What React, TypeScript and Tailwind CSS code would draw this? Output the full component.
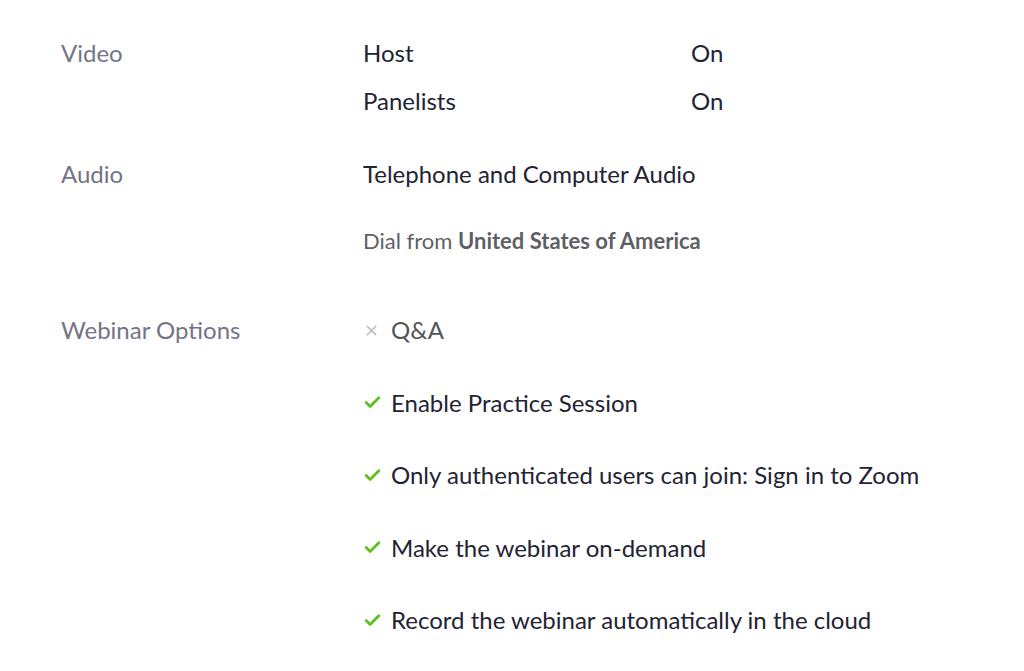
import { Check, X } from 'lucide-react';

const options = [
  { on: false, text: 'Q&A' },
  { on: true, text: 'Enable Practice Session' },
  { on: true, text: 'Only authenticated users can join: Sign in to Zoom' },
  { on: true, text: 'Make the webinar on-demand' },
  { on: true, text: 'Record the webinar automatically in the cloud' },
];

export default function App() {
  return (
    <div className="min-h-screen bg-white pl-[61px] pt-[29px] font-['Lato','Liberation_Sans',sans-serif] text-[24px] text-[#232333]">
      {/* Video */}
      <div className="flex">
        <div className="w-[302px] leading-[48px] text-[#747487]">Video</div>
        <div className="flex flex-col">
          <div className="flex leading-[48px]">
            <span className="w-[328px]">Host</span>
            <span>On</span>
          </div>
          <div className="flex leading-[48px]">
            <span className="w-[328px]">Panelists</span>
            <span>On</span>
          </div>
        </div>
      </div>

      {/* Audio */}
      <div className="mt-[25px] flex">
        <div className="w-[302px] leading-[48px] text-[#747487]">Audio</div>
        <div className="flex flex-col">
          <div className="leading-[48px]">Telephone and Computer Audio</div>
          <div className="mt-[19px] text-[22px] leading-[48px] text-[#5f5f66]">
            Dial from <span className="font-bold">United States of America</span>
          </div>
        </div>
      </div>

      {/* Webinar options */}
      <div className="mt-[41px] flex">
        <div className="w-[302px] leading-[48px] text-[#747487]">Webinar Options</div>
        <div className="flex flex-col gap-[24.5px]">
          {options.map((o) => (
            <div key={o.text} className="flex items-center leading-[48px]">
              <span className="flex w-[28px] items-center">
                {o.on ? (
                  <Check className="h-[19px] w-[19px] text-[#5dc020]" strokeWidth={3.5} />
                ) : (
                  <X className="h-[17px] w-[17px] text-[#b8b8b8]" strokeWidth={2} />
                )}
              </span>
              <span className={o.on ? '' : 'text-[#555555]'}>{o.text}</span>
            </div>
          ))}
        </div>
      </div>
    </div>
  );
}
